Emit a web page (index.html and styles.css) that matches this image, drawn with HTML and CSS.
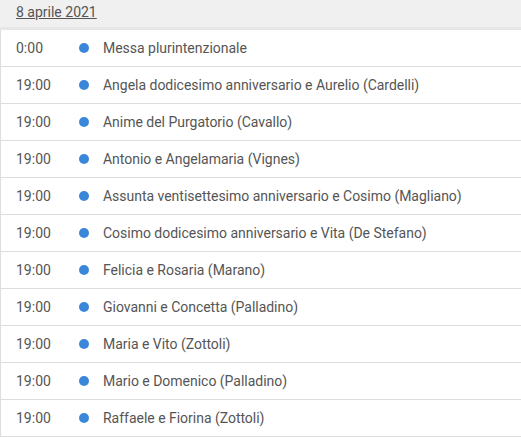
FILE: index.html
```html
<!DOCTYPE html>
<html lang="it">
<head>
<meta charset="utf-8">
<link rel="stylesheet" href="styles.css">
</head>
<body>
<div class="day">
  <div class="day-head"><a class="date" href="#">8 aprile 2021</a></div>
  <ul class="events">
    <li class="ev"><span class="time">0:00</span><span class="dot"></span><span class="title">Messa plurintenzionale</span></li>
    <li class="ev"><span class="time">19:00</span><span class="dot"></span><span class="title">Angela dodicesimo anniversario e Aurelio (Cardelli)</span></li>
    <li class="ev"><span class="time">19:00</span><span class="dot"></span><span class="title">Anime del Purgatorio (Cavallo)</span></li>
    <li class="ev"><span class="time">19:00</span><span class="dot"></span><span class="title">Antonio e Angelamaria (Vignes)</span></li>
    <li class="ev"><span class="time">19:00</span><span class="dot"></span><span class="title">Assunta ventisettesimo anniversario e Cosimo (Magliano)</span></li>
    <li class="ev"><span class="time">19:00</span><span class="dot"></span><span class="title">Cosimo dodicesimo anniversario e Vita (De Stefano)</span></li>
    <li class="ev"><span class="time">19:00</span><span class="dot"></span><span class="title">Felicia e Rosaria (Marano)</span></li>
    <li class="ev"><span class="time">19:00</span><span class="dot"></span><span class="title">Giovanni e Concetta (Palladino)</span></li>
    <li class="ev"><span class="time">19:00</span><span class="dot"></span><span class="title">Maria e Vito (Zottoli)</span></li>
    <li class="ev"><span class="time">19:00</span><span class="dot"></span><span class="title">Mario e Domenico (Palladino)</span></li>
    <li class="ev"><span class="time">19:00</span><span class="dot"></span><span class="title">Raffaele e Fiorina (Zottoli)</span></li>
  </ul>
</div>
</body>
</html>
```
FILE: styles.css
```css
html, body {
  margin: 0;
  padding: 0;
  background: #fff;
}
body {
  font-family: Roboto, "Liberation Sans", sans-serif;
  font-size: 14px;
  color: #555;
  overflow: hidden;
}
.day {
  width: 521px;
}
.day-head {
  height: 27px;
  background: #f0f0f0;
  border-bottom: 3px solid #e6e6e6;
  box-sizing: content-box;
  display: flex;
  align-items: flex-start;
  padding-left: 16px;
}
.date {
  color: #555;
  text-decoration: underline;
  line-height: 14px;
  margin-top: 5px;
}
.events {
  list-style: none;
  margin: 0;
  padding: 0;
  border-left: 1px solid #ddd;
}
.ev {
  display: flex;
  align-items: center;
  height: 36px;
  border-bottom: 1px solid #ddd;
}
.time {
  width: 63px;
  padding-left: 15px;
}
.dot {
  width: 10px;
  height: 10px;
  border-radius: 50%;
  background: #3a87d9;
  margin-right: 14px;
}
.title {
  color: #555;
  letter-spacing: -0.02px;
}
```
